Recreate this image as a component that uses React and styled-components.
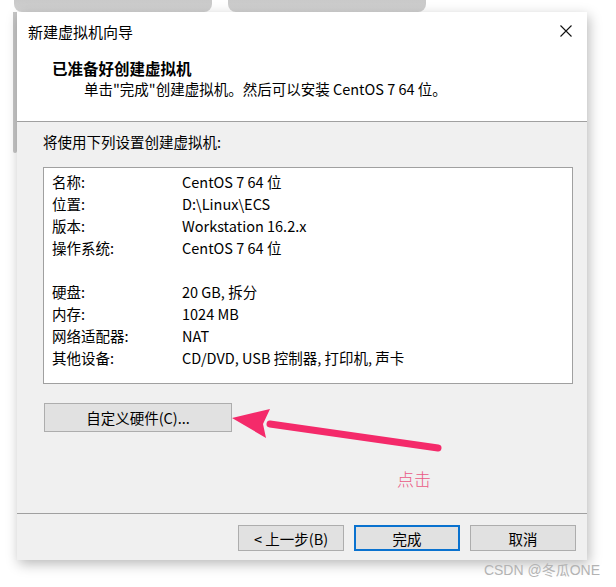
import styled, { createGlobalStyle } from "styled-components";

const FONT = `"Noto Sans CJK SC", "Noto Sans", sans-serif`;

const GlobalStyle = createGlobalStyle`
  body {
    margin: 0;
    background: #ffffff;
    font-family: ${FONT};
    color: #000000;
  }
`;

const summary = [
  { label: "名称:", value: "CentOS 7 64 位" },
  { label: "位置:", value: "D:\\Linux\\ECS" },
  { label: "版本:", value: "Workstation 16.2.x" },
  { label: "操作系统:", value: "CentOS 7 64 位" },
  { label: "", value: "" },
  { label: "硬盘:", value: "20 GB, 拆分" },
  { label: "内存:", value: "1024 MB" },
  { label: "网络适配器:", value: "NAT" },
  { label: "其他设备:", value: "CD/DVD, USB 控制器, 打印机, 声卡" },
];

export default function App() {
  return (
    <Page>
      <GlobalStyle />
      <Tabs>
        <BackTab />
        <BackTab />
      </Tabs>
      <Stage>
        <SideStrip />
        <Dialog>
          <Header>
            <TitleBar>
              <Title>新建虚拟机向导</Title>
              <CloseButton>
                <svg width="12" height="12" viewBox="0 0 12 12">
                  <path d="M0.5 0.5 L11.5 11.5 M11.5 0.5 L0.5 11.5" stroke="#111" strokeWidth="1.1" fill="none" />
                </svg>
              </CloseButton>
            </TitleBar>
            <Heading>已准备好创建虚拟机</Heading>
            <SubText>单击"完成"创建虚拟机。然后可以安装 CentOS 7 64 位。</SubText>
          </Header>

          <Body>
            <Intro>将使用下列设置创建虚拟机:</Intro>
            <ListBox>
              {summary.map((row, i) => (
                <Row key={i}>
                  <Label>{row.label}</Label>
                  <Value>{row.value}</Value>
                </Row>
              ))}
            </ListBox>
            <WinButton $wide>自定义硬件(C)...</WinButton>

            <Arrow width="240" height="60" viewBox="0 0 240 60">
              <path d="M50 24 L218 48" stroke="#f42a6a" strokeWidth="7" strokeLinecap="round" fill="none" />
              <path d="M12 18 L50 9 L43 24 L46 38 Z" fill="#f42a6a" />
            </Arrow>
            <Note>点击</Note>
          </Body>

          <Footer>
            <WinButton>&lt; 上一步(B)</WinButton>
            <WinButton $primary>完成</WinButton>
            <WinButton>取消</WinButton>
          </Footer>
        </Dialog>
      </Stage>
      <Watermark>CSDN @冬瓜ONE</Watermark>
    </Page>
  );
}

const Page = styled.div`
  width: 616px;
  height: 587px;
  overflow: hidden;
`;

const Tabs = styled.div`
  display: flex;
  gap: 16px;
  padding-left: 14px;
  height: 12px;
`;

const BackTab = styled.div`
  width: 198px;
  height: 12px;
  background: linear-gradient(#c9c9c9, #d2d2d2);
  border-radius: 0 0 8px 8px;
`;

const Stage = styled.div`
  display: flex;
  align-items: flex-start;
  padding-left: 13px;
`;

const SideStrip = styled.div`
  width: 4px;
  height: 141px;
  background: #c6c6c6;
  border-radius: 0 0 3px 3px;
`;

const Dialog = styled.div`
  width: 570px;
  height: 548px;
  display: flex;
  flex-direction: column;
  background: #f0f0f0;
  box-shadow: 2px 4px 12px rgba(0, 0, 0, 0.28);
`;

const Header = styled.div`
  height: 109px;
  background: #ffffff;
  border-bottom: 1px solid #a0a0a0;
  display: flex;
  flex-direction: column;
`;

const TitleBar = styled.div`
  height: 38px;
  display: flex;
  align-items: center;
  justify-content: space-between;
  padding: 0 15px 0 11px;
`;

const Title = styled.span`
  font-size: 15px;
`;

const CloseButton = styled.span`
  display: flex;
  width: 12px;
  height: 12px;
`;

const Heading = styled.div`
  margin-top: 8px;
  padding-left: 35px;
  line-height: 20px;
  font-size: 15.5px;
  font-weight: 700;
`;

const SubText = styled.div`
  padding-left: 67px;
  line-height: 22px;
  font-size: 14.5px;
`;

const Body = styled.div`
  position: relative;
  height: 391px;
  padding: 10px 0 0 26px;
  box-sizing: border-box;
  font-size: 14.5px;
`;

const Intro = styled.div`
  line-height: 20px;
`;

const ListBox = styled.div`
  margin-top: 15px;
  width: 530px;
  height: 217px;
  box-sizing: border-box;
  padding-top: 2px;
  background: #ffffff;
  border: 1px solid #a0a0a0;
`;

const Row = styled.div`
  display: grid;
  grid-template-columns: 130px 1fr;
  height: 22px;
  align-items: center;
  padding-left: 8px;
`;

const Label = styled.span``;

const Value = styled.span``;

const WinButton = styled.div`
  display: flex;
  align-items: center;
  justify-content: center;
  box-sizing: border-box;
  width: ${(p) => (p.$wide ? "188px" : "106px")};
  height: ${(p) => (p.$wide ? "29px" : "26px")};
  margin: ${(p) => (p.$wide ? "19px 0 0 1px" : "0")};
  background: #e1e1e1;
  border: ${(p) => (p.$primary ? "2px solid #0a72cf" : "1px solid #adadad")};
  font-size: 14.5px;
`;

const Arrow = styled.svg`
  position: absolute;
  left: 203px;
  top: 278px;
`;

const Note = styled.span`
  position: absolute;
  left: 380px;
  top: 344px;
  font-size: 17px;
  color: #ea5a85;
  font-weight: 300;
`;

const Footer = styled.div`
  height: 47px;
  box-sizing: border-box;
  border-top: 1px solid #a0a0a0;
  display: flex;
  justify-content: flex-end;
  gap: 10px;
  padding: 11px 11px 0 0;
`;

const Watermark = styled.div`
  margin-top: 0;
  line-height: 20px;
  text-align: right;
  padding-right: 16px;
  font-size: 14px;
  color: #b3b3b3;
  font-family: "Liberation Sans", "Noto Sans CJK SC", sans-serif;
`;
